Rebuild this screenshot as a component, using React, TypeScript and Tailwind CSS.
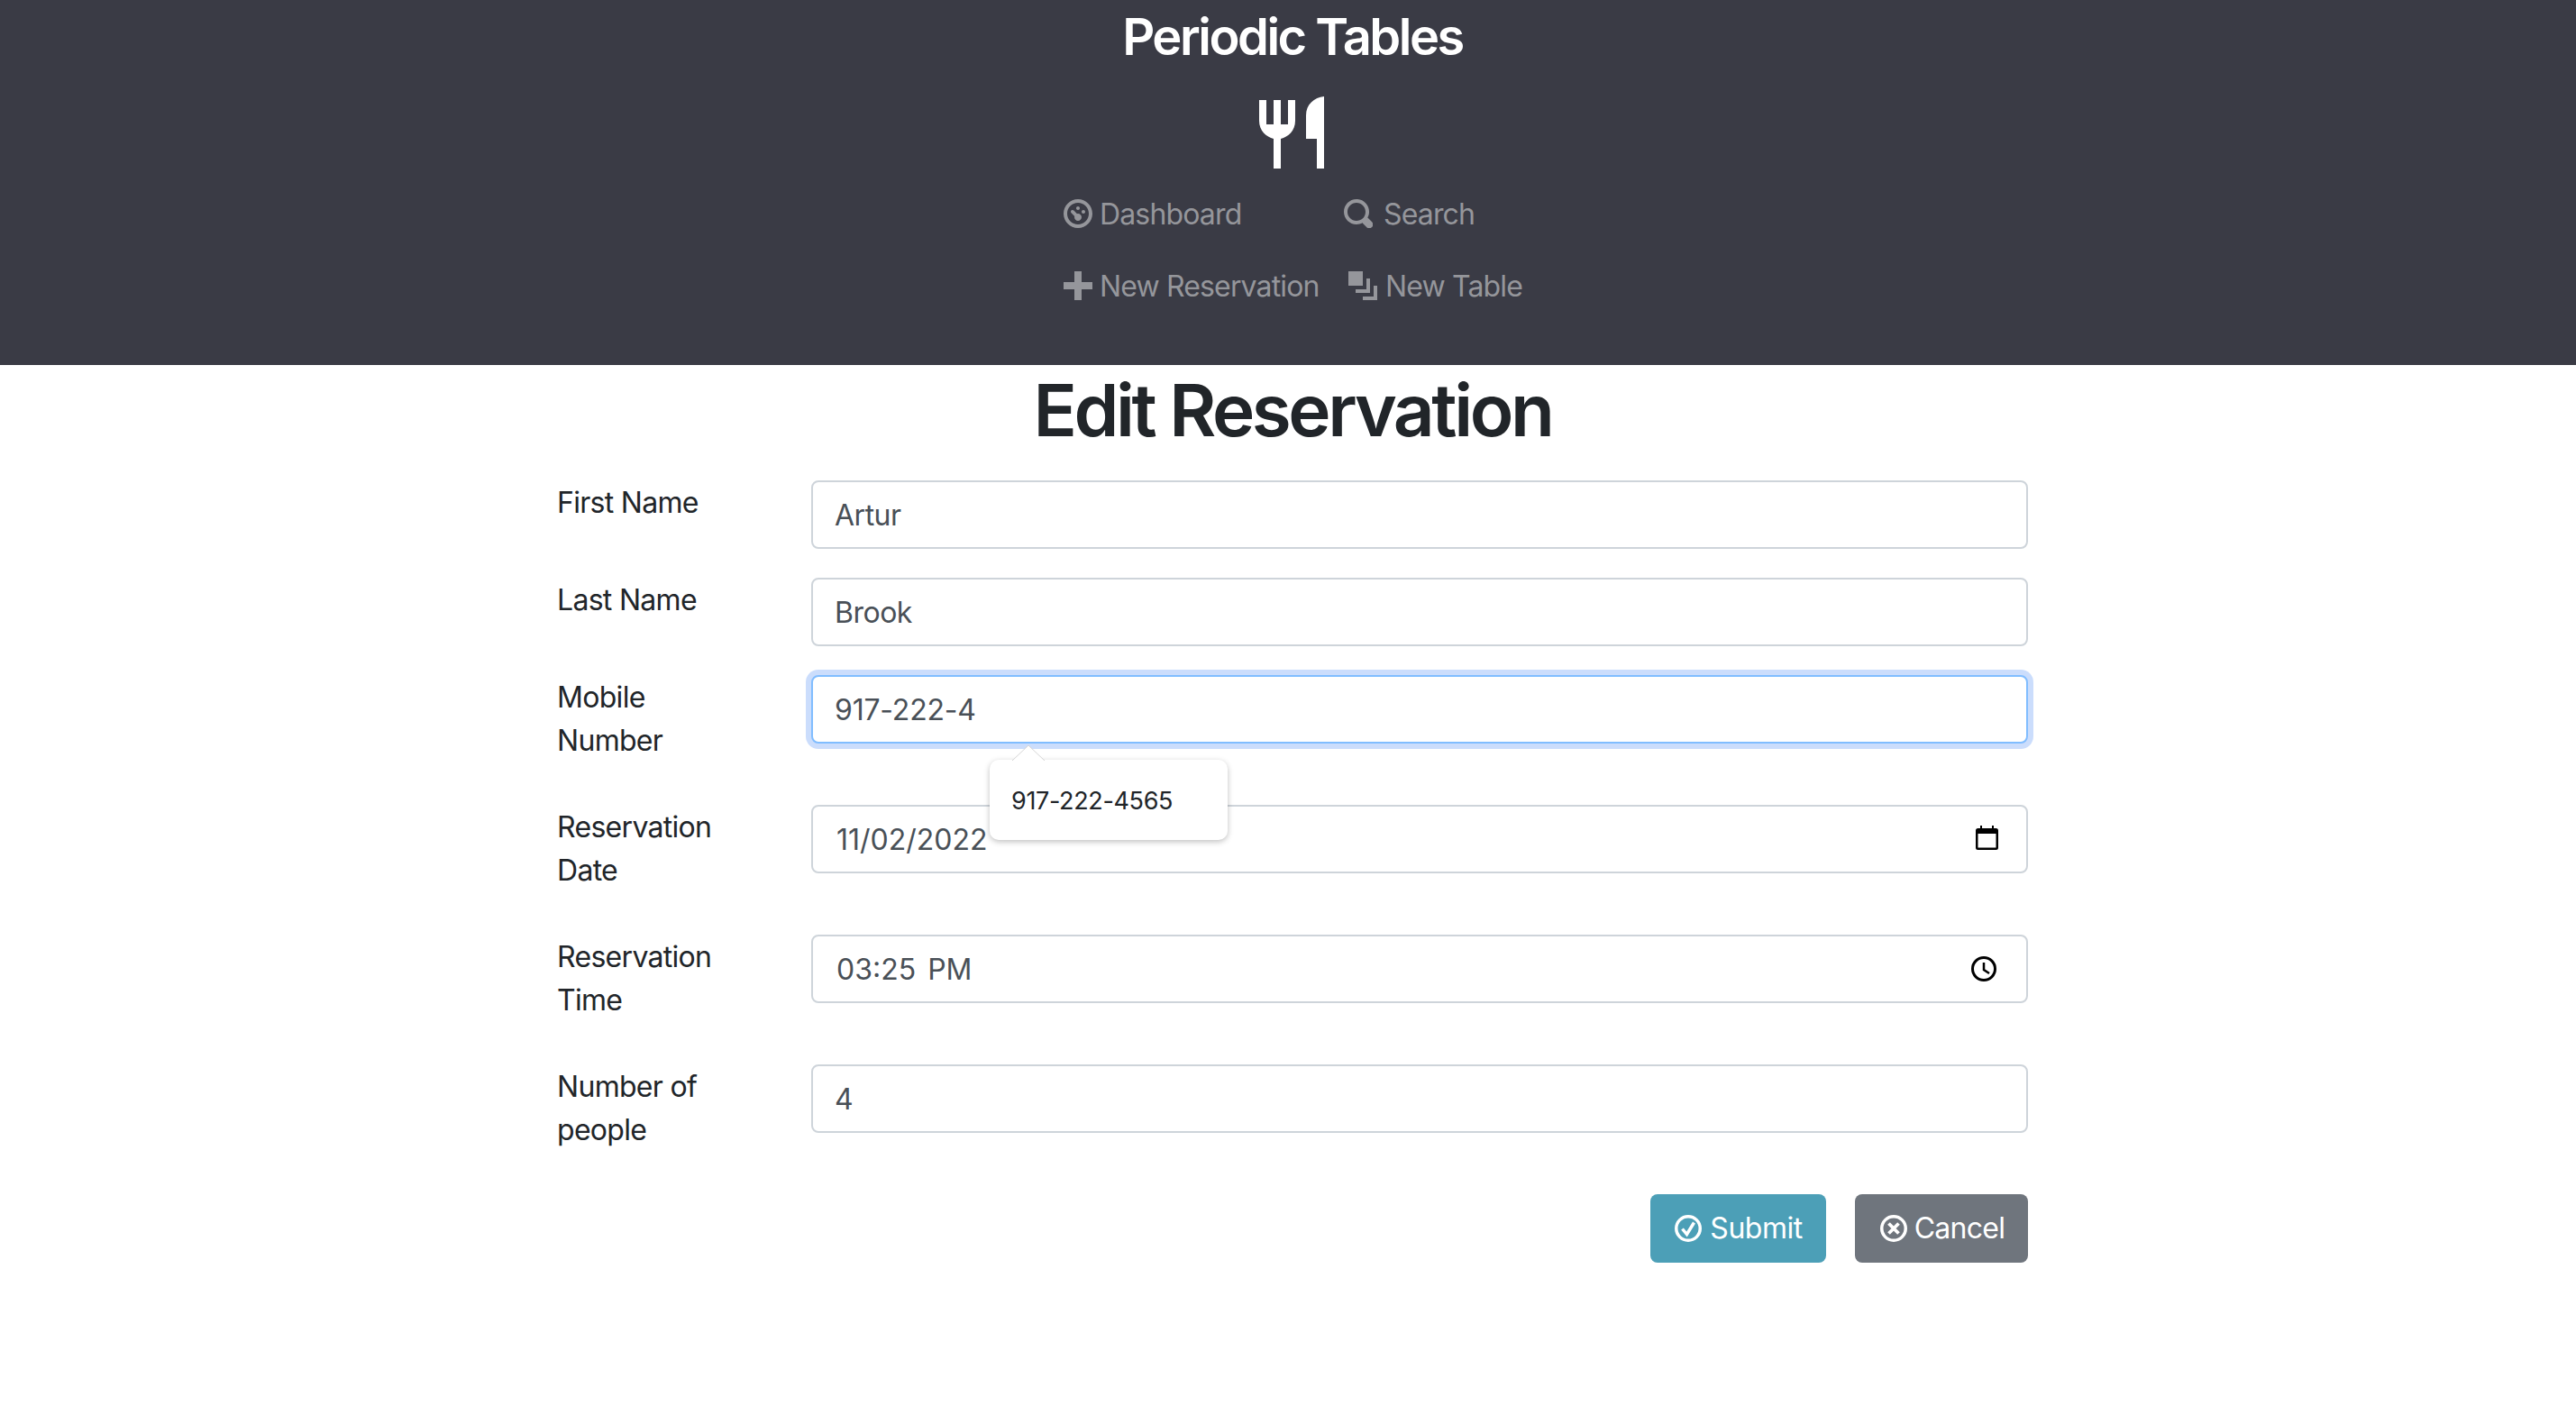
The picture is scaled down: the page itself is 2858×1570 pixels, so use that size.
import React from "react";

function Dash() {
  return (
    <svg viewBox="0 0 8 8" className="w-8 h-8 shrink-0 -mt-[2px] fill-current">
      <path d="M4 0c-2.2 0-4 1.8-4 4s1.8 4 4 4 4-1.8 4-4-1.8-4-4-4zm0 1c1.66 0 3 1.34 3 3s-1.34 3-3 3-3-1.34-3-3 1.34-3 3-3zm0 1c-.28 0-.5.22-.5.5s.22.5.5.5.5-.22.5-.5-.22-.5-.5-.5zm-1.66 1a.5.5 0 0 0-.19.84l.91.91c-.02.08-.06.16-.06.25 0 .55.45 1 1 1s1-.45 1-1-.45-1-1-1c-.09 0-.17.04-.25.06l-.91-.91a.5.5 0 0 0-.44-.16.5.5 0 0 0-.06 0zm3.16 0c-.28 0-.5.22-.5.5s.22.5.5.5.5-.22.5-.5-.22-.5-.5-.5z" />
    </svg>
  );
}
function Glass() {
  return (
    <svg viewBox="0 0 8 8" className="w-8 h-8 shrink-0 -mt-[2px] fill-current">
      <path d="M3.5 0c-1.93 0-3.5 1.57-3.5 3.5s1.57 3.5 3.5 3.5c.59 0 1.17-.14 1.66-.41a1 1 0 0 0 .13.13l1 1a1.02 1.02 0 1 0 1.44-1.44l-1-1a1 1 0 0 0-.16-.13c.27-.49.44-1.06.44-1.66 0-1.93-1.57-3.5-3.5-3.5zm0 1c1.39 0 2.5 1.11 2.5 2.5 0 .66-.24 1.27-.66 1.72-.01.01-.02.02-.03.03a1 1 0 0 0-.13.13c-.44.4-1.04.63-1.69.63-1.39 0-2.5-1.11-2.5-2.5s1.11-2.5 2.5-2.5z" />
    </svg>
  );
}
function Plus() {
  return (
    <svg viewBox="0 0 8 8" className="w-8 h-8 shrink-0 -mt-[2px] fill-current">
      <path d="M3 0v3h-3v2h3v3h2v-3h3v-2h-3v-3h-2z" />
    </svg>
  );
}
function Layers() {
  return (
    <svg viewBox="0 0 8 8" className="w-8 h-8 shrink-0 -mt-[2px] fill-current">
      <path d="M0 0v4h4v-4h-4zm5 2v3h-3v1h4v-4h-1zm2 2v3h-3v1h4v-4h-1z" />
    </svg>
  );
}
function Cutlery() {
  return (
    <svg viewBox="13 12 72 80" className="w-[72px] h-20 fill-white">
      <path d="M13 16H21V43H29V16H37V43H45V16H53V39C53 50 45 57 37 59V92H29V59C21 57 13 50 13 39Z" />
      <path d="M85 12V92H77V59H65V33C65 21 74 13 85 12Z" />
    </svg>
  );
}
function CheckCircle() {
  return (
    <svg viewBox="0 0 30 30" className="w-[30px] h-[30px] shrink-0 fill-none stroke-white">
      <circle cx="15" cy="15" r="13.25" strokeWidth="3.500" />
      <path d="M8.500 15.500L13.500 21.500L21.500 8.500" strokeWidth="3.500" />
    </svg>
  );
}
function XCircle() {
  return (
    <svg viewBox="0 0 30 30" className="w-[30px] h-[30px] shrink-0 fill-none stroke-white">
      <circle cx="15" cy="15" r="13.25" strokeWidth="3.500" />
      <path d="M9.500 9.500L20.500 20.500M20.500 9.500L9.500 20.500" strokeWidth="3.800" />
    </svg>
  );
}
function Calendar() {
  return (
    <svg viewBox="0 0 25 27" className="w-[25px] h-[27px]">
      <path d="M5 0h2v3h11V0h2v3h2.500A2.500 2.500 0 0 1 25 5.500v19a2.500 2.500 0 0 1-2.500 2.500h-20A2.500 2.500 0 0 1 0 24.500v-19A2.500 2.500 0 0 1 2.500 3H5zM2.500 9v15.500h20V9z" fill="#000" />
    </svg>
  );
}
function Clock() {
  return (
    <svg viewBox="0 0 28 28" className="w-7 h-7 fill-none stroke-black">
      <circle cx="14" cy="14" r="12.500" strokeWidth="3" />
      <path d="M14 7V15L20 19" strokeWidth="2.500" />
    </svg>
  );
}

function NavItem({ icon, label, gap }: { icon: React.ReactNode; label: string; gap: string }) {
  return (
    <a className={`flex items-center h-12 whitespace-nowrap tracking-[-0.85px] ${gap} text-[#95969b]`}>
      {icon}
      <span>{label}</span>
    </a>
  );
}

function Row({
  label,
  value,
  focus,
  icon,
  shift,
  tall,
  spaced,
}: {
  label: string;
  value: string;
  focus?: boolean;
  icon?: React.ReactNode;
  shift?: boolean;
  tall?: boolean;
  spaced?: boolean;
}) {
  return (
    <div className="flex mb-8">
      <label className={`w-[282px] px-[30px] pt-[1px] leading-[48px] tracking-[-0.7px] text-[#212529] ${tall ? "mb-[15px]" : ""}`}>{label}</label>
      <div className="w-[1410px] px-[30px]">
        <div className="relative">
          <input
            readOnly
            value={value}
            className={
              focus
                ? "block w-full h-[76px] px-6 bg-white text-[#495057] tracking-[-0.2px] rounded-lg border-2 border-[#80bdff] ring-[6px] ring-[#cbddfc] outline-none"
                : shift
                  ? spaced
                    ? "block w-full h-[76px] pl-[26px] pr-6 bg-white text-[#495057] [word-spacing:4px] rounded-lg border-2 border-[#ced4da] outline-none"
                    : "block w-full h-[76px] pl-[26px] pr-6 bg-white text-[#495057] rounded-lg border-2 border-[#ced4da] outline-none"
                  : "block w-full h-[76px] px-6 bg-white text-[#495057] tracking-[-0.5px] rounded-lg border-2 border-[#ced4da] outline-none"
            }
          />
          {icon}
        </div>
      </div>
    </div>
  );
}

export default function App() {
  return (
    <div className="min-h-[1570px] bg-white text-[32px] leading-[48px] [font-family:Inter,sans-serif]">
      <header className="h-[405px] bg-[#3a3b45] pl-[10px] pt-2">
        <h3 className="text-center text-white text-[56px] leading-[67px] font-[580] tracking-[-2.5px]">Periodic Tables</h3>
        <div className="flex justify-center mt-8 pr-[2px]">
          <Cutlery />
        </div>
        <nav className="w-[508px] mx-auto mt-[27px] flex flex-col gap-8">
          <div className="flex">
            <div className="w-[311px] shrink-0">
              <NavItem icon={<Dash />} label="Dashboard" gap="gap-[8px]" />
            </div>
            <NavItem icon={<Glass />} label="Search" gap="gap-[12px]" />
          </div>
          <div className="flex">
            <div className="w-[316px] shrink-0">
              <NavItem icon={<Plus />} label="New Reservation" gap="gap-[8px]" />
            </div>
            <NavItem icon={<Layers />} label="New Table" gap="gap-[9px]" />
          </div>
        </nav>
      </header>

      <main className="pl-[10px]">
        <h1 className="text-center text-[80px] leading-[96px] pt-[2px] font-[580] text-[#212529] mb-[30px] tracking-[-3.4px]">Edit Reservation</h1>
        <form className="w-[1692px] mx-auto">
          <Row label="First Name" value="Artur" />
          <Row label="Last Name" value="Brook" />
          <div className="relative">
            <Row label="Mobile Number" value="917-222-4" focus tall />
            <div className="absolute left-[510px] top-[78px] z-10">
              <svg viewBox="0 0 36 17" className="w-9 h-[17px] block ml-[25px] -mb-px relative z-10">
                <path d="M0 17L18 0L36 17" fill="#fff" stroke="#d5d5d5" strokeWidth="1" />
              </svg>
              <div className="w-[264px] h-[89px] flex items-center pl-[24px] pt-[2px] bg-white rounded-[10px] shadow-[0_2px_6px_rgba(0,0,0,0.25)] text-[27px] tracking-[-0.35px] text-[#212529]">
                917-222-4565
              </div>
            </div>
          </div>
          <Row
            label="Reservation Date"
            value="11/02/2022"
            shift
            tall
            icon={
              <span className="absolute left-[1292px] top-[23px] flex">
                <Calendar />
              </span>
            }
          />
          <Row
            label="Reservation Time"
            value="03:25 PM"
            shift
            tall
            spaced
            icon={
              <span className="absolute left-[1287px] top-6 flex">
                <Clock />
              </span>
            }
          />
          <Row label="Number of people" value="4" tall />
          <div className="flex justify-end gap-8 px-[30px]">
            <button type="button" className="w-[195px] h-[76px] flex items-center justify-center gap-[9px] pl-[1px] rounded-lg bg-[#4c9fb7] text-white tracking-[-0.5px]">
              <CheckCircle />
              Submit
            </button>
            <button type="button" className="w-[192px] h-[76px] flex items-center justify-center gap-[8px] pl-[2px] rounded-lg bg-[#6f757d] text-white tracking-[-0.7px]">
              <XCircle />
              Cancel
            </button>
          </div>
        </form>
      </main>
    </div>
  );
}
